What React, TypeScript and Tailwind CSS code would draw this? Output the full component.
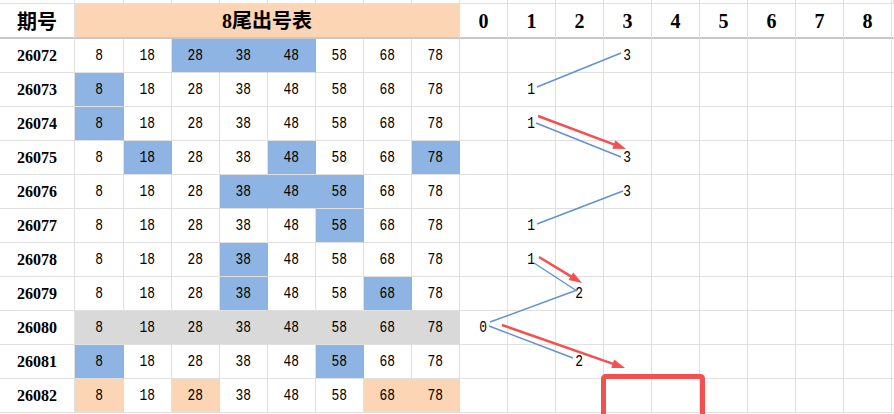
import React from "react";

type HL = "b" | "o" | "g";
type Row = { id: string; hl: Record<number, HL>; chart: Record<number, string> };

const rows: Row[] = [
  { id: "26072", hl: { 3: "b", 4: "b", 5: "b" }, chart: { 3: "3" } },
  { id: "26073", hl: { 1: "b" }, chart: { 1: "1" } },
  { id: "26074", hl: { 1: "b" }, chart: { 1: "1" } },
  { id: "26075", hl: { 2: "b", 5: "b", 8: "b" }, chart: { 3: "3" } },
  { id: "26076", hl: { 4: "b", 5: "b", 6: "b" }, chart: { 3: "3" } },
  { id: "26077", hl: { 6: "b" }, chart: { 1: "1" } },
  { id: "26078", hl: { 4: "b" }, chart: { 1: "1" } },
  { id: "26079", hl: { 4: "b", 7: "b" }, chart: { 2: "2" } },
  { id: "26080", hl: { 1: "g", 2: "g", 3: "g", 4: "g", 5: "g", 6: "g", 7: "g", 8: "g" }, chart: { 0: "0" } },
  { id: "26081", hl: { 1: "b", 6: "b" }, chart: { 2: "2" } },
  { id: "26082", hl: { 1: "o", 3: "o", 7: "o", 8: "o" }, chart: {} },
];

const nums = ["8", "18", "28", "38", "48", "58", "68", "78"];

const hlClass: Record<HL, string> = {
  b: "bg-[#8db4e2] border-r-[#8db4e2]",
  o: "bg-[#fcd5b4] border-r-[#fcd5b4]",
  g: "bg-[#d9d9d9] border-r-[#d9d9d9]",
};

const cellFont = { fontFamily: '"Liberation Mono", "DejaVu Sans Mono", monospace' };

const blueLines: [number, number, number, number][] = [
  [537, 87, 621, 53],
  [536, 123, 621, 157],
  [623, 191, 537, 224],
  [534, 263, 577, 291],
  [577, 290, 490, 322],
  [489, 326, 573, 358],
];

const redArrows: [number, number, number, number][] = [
  [538, 116, 626, 149],
  [539, 257, 582, 283],
  [502, 325, 625, 368],
];

function Arrow({ a }: { a: [number, number, number, number] }) {
  const [x1, y1, x2, y2] = a;
  const dx = x2 - x1;
  const dy = y2 - y1;
  const len = Math.hypot(dx, dy);
  const ux = dx / len;
  const uy = dy / len;
  const nx = -uy;
  const ny = ux;
  const hl = 13;
  const hw = 4.5;
  const bx = x2 - ux * hl;
  const by = y2 - uy * hl;
  const pts = `${x2},${y2} ${bx + nx * hw},${by + ny * hw} ${bx - nx * hw},${by - ny * hw}`;
  return (
    <g>
      <line x1={x1} y1={y1} x2={bx + ux * 2} y2={by + uy * 2} stroke="#f55050" strokeWidth={2.5} />
      <polygon points={pts} fill="#f55050" />
    </g>
  );
}

function Num({ children }: { children: React.ReactNode }) {
  return (
    <span className="inline-block scale-x-[0.76] text-[17px] leading-none" style={cellFont}>
      {children}
    </span>
  );
}

export default function App() {
  const gridCols = "grid grid-cols-[75px_49px_repeat(16,48px)_1fr]";
  const line = "border-r border-b border-[#e0e0e0]";
  return (
    <div className="relative w-[894px] h-[414px] overflow-hidden bg-white text-black">
      <div className={gridCols}>
        {Array.from({ length: 19 }).map((_, i) => (
          <div key={"t" + i} className={`h-[4px] ${line}`} />
        ))}
        <div
          className="h-[35px] flex items-center justify-center border-r border-r-[#e0e0e0] border-b-2 border-b-[#c8c8c8] text-[20px] font-bold"
          style={{ fontFamily: '"Noto Sans CJK SC", sans-serif' }}
        >
          期号
        </div>
        <div
          className="col-span-8 h-[35px] flex items-center justify-center bg-[#fcd5b4] border-r border-r-[#fcd5b4] border-b-2 border-b-[#c8c8c8] text-[20px] font-bold"
          style={{ fontFamily: '"Liberation Serif", "Noto Sans CJK SC", serif' }}
        >
          8尾出号表
        </div>
        {Array.from({ length: 9 }).map((_, i) => (
          <div
            key={"h" + i}
            className="h-[35px] flex items-center justify-center border-r border-r-[#e0e0e0] border-b-2 border-b-[#c8c8c8] text-[20px] font-bold"
            style={{ fontFamily: '"Liberation Serif", serif' }}
          >
            {i}
          </div>
        ))}
        <div className="h-[35px] border-b-2 border-b-[#c8c8c8]" />
        {rows.map((r) => (
          <React.Fragment key={r.id}>
            <div
              className={`h-[34px] flex items-center justify-center ${line} text-[16px] font-bold`}
              style={{ fontFamily: '"Liberation Serif", serif' }}
            >
              {r.id}
            </div>
            {nums.map((n, i) => {
              const h = r.hl[i + 1];
              return (
                <div
                  key={n}
                  className={`h-[34px] flex items-center justify-center ${line} ${h ? hlClass[h] : ""}`}
                >
                  <Num>{n}</Num>
                </div>
              );
            })}
            {Array.from({ length: 9 }).map((_, i) => (
              <div key={"c" + i} className={`h-[34px] flex items-center justify-center ${line}`}>
                {r.chart[i] ? <Num>{r.chart[i]}</Num> : null}
              </div>
            ))}
            <div className="h-[34px] border-b border-[#e0e0e0]" />
          </React.Fragment>
        ))}
      </div>
      <svg className="absolute left-0 top-0 pointer-events-none" width={894} height={414}>
        {blueLines.map((l, i) => (
          <line key={i} x1={l[0]} y1={l[1]} x2={l[2]} y2={l[3]} stroke="#6190d2" strokeWidth={1.4} />
        ))}
        {redArrows.map((a, i) => (
          <Arrow key={i} a={a} />
        ))}
        <rect x={603.5} y={376.5} width={99} height={46} rx={2} fill="none" stroke="#f55050" strokeWidth={5} />
      </svg>
    </div>
  );
}
